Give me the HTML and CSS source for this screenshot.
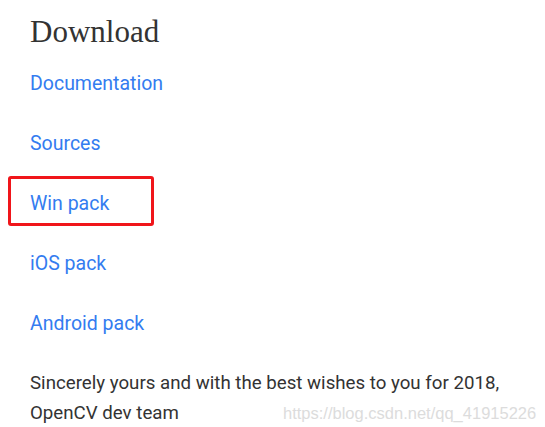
FILE: index.html
```html
<!DOCTYPE html>
<html>
<head>
  <meta charset="utf-8">
  <title>Download</title>
  <link rel="stylesheet" href="styles.css">
</head>
<body>
  <div class="content">
    <h2 class="title">Download</h2>
    <ul class="links">
      <li><a href="#">Documentation</a></li>
      <li><a href="#">Sources</a></li>
      <li class="marked"><a href="#">Win pack</a></li>
      <li><a href="#">iOS pack</a></li>
      <li><a href="#">Android pack</a></li>
    </ul>
    <p class="note">Sincerely yours and with the best wishes to you for 2018,<br>OpenCV dev team</p>
  </div>
  <div class="watermark">https://blog.csdn.net/qq_41915226</div>
</body>
</html>
```

FILE: styles.css
```css
body {
  margin: 0;
  background: #fff;
  font-family: Roboto, "Liberation Sans", sans-serif;
  color: #333;
}

.content {
  padding: 13px 0 0 30px;
}

.title {
  margin: 0;
  font-family: "Liberation Serif", "DejaVu Serif", serif;
  font-weight: normal;
  font-size: 31px;
  line-height: 38px;
  color: #333;
}

.links {
  list-style: none;
  margin: 21px 0 0;
  padding: 0;
}

.links li {
  position: relative;
  height: 60px;
  line-height: 24px;
  font-size: 19.5px;
}

.links a {
  color: #337cf0;
  text-decoration: none;
}

.marked::before {
  content: "";
  position: absolute;
  left: -22px;
  top: -16px;
  width: 140px;
  height: 44px;
  border: 3px solid #f0151a;
  border-radius: 3px;
}

.note {
  margin: -4px 0 0;
  font-size: 18.7px;
  line-height: 30px;
  color: #333;
}

.watermark {
  position: absolute;
  left: 283px;
  top: 404px;
  font-family: "Liberation Sans", Arial, sans-serif;
  font-size: 16.5px;
  color: #dcdcdc;
}
```
